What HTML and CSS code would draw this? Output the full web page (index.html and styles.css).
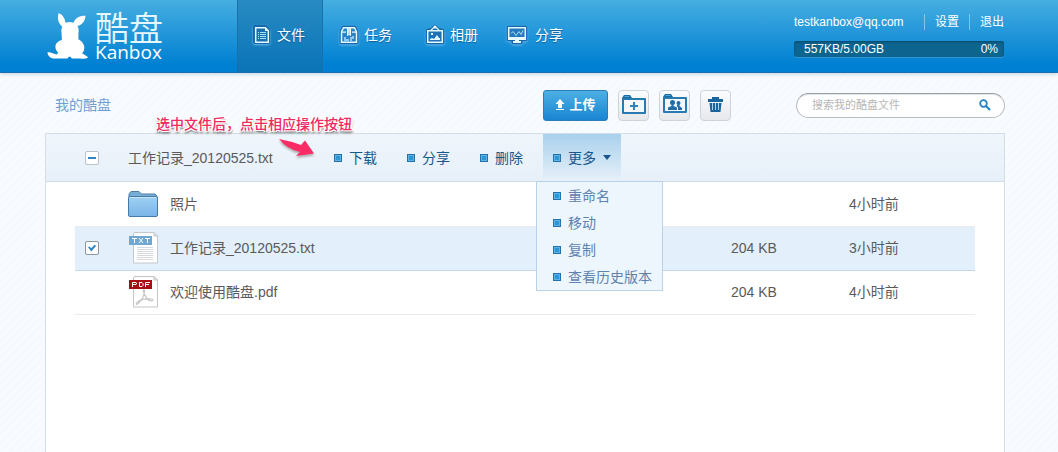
FILE: index.html
```html
<!DOCTYPE html>
<html lang="zh-CN">
<head>
<meta charset="utf-8">
<title>酷盘 Kanbox</title>
<link rel="stylesheet" href="styles.css">
</head>
<body>
<header class="header">
  <a class="logo" href="#">
    <svg class="logo-mark" viewBox="50 38 124 142" aria-hidden="true">
      <path fill="#fff" d="M85 40C92 41 104 50 106 69Q118 65 130 69C135 55 150 47 166 48C167 62 156 76 142 79C146 85 147 93 145 99L145 119C158 126 166 139 162 151Q160 158 156 161L166 167Q173 170 174 175Q164 179 151 177L125 177L121 172L116 172L112 177H68Q54 174 51 159Q58 156 66 161L79 165L84 160Q73 149 76 136Q80 125 95 121L94 99Q92 90 96 80C83 70 81 53 85 40Z"/>
    </svg>
    <span class="logo-text">
      <span class="logo-cn">酷盘</span>
      <span class="logo-en">Kanbox</span>
    </span>
  </a>
  <nav class="nav">
    <a class="nav-item nav-item-active" href="#">
      <svg class="nav-icon" viewBox="0 0 20 22" aria-hidden="true">
        <path class="icon-halo" d="M3 3h10l3 3v12H3z"/>
        <path fill="#1a6fae" stroke="#e3fbff" stroke-width="1.500" d="M3.700 3.700h9.600l3 3v11.600H3.700z"/>
        <path stroke="#a8e2f7" d="M6 8.500h1m1 0h6M6 10.500h1m1 0h6M6 12.500h1m1 0h6M6 14.500h1m1 0h6"/>
        <path fill="#e3fbff" d="M13 3v4h4z"/>
      </svg>
      <span>文件</span>
    </a>
    <a class="nav-item" href="#">
      <svg class="nav-icon" viewBox="0 0 20 22" aria-hidden="true">
        <path class="icon-halo" d="M4.500 3.700h11l2 4v10.600h-15V7.700z"/>
        <path fill="#2a83c8" stroke="#e3fbff" stroke-width="1.500" d="M4.500 3.700h11l2 4v10.600h-15V7.700z"/>
        <path fill="#e3fbff" d="M3 7.500h4v1.200H3zM13 7.500h4v1.200h-4zM8 4h1v6.500l1-.7 1 .7V4h1v8l-2-1-2 1z"/>
        <path fill="#bfe6fa" d="M9 4h2v6l-1-.5-1 .5z"/>
        <path fill="#8ac9ee" d="M5 13h2v2h3v2H5zM11 13h2v-1h2v3h-2v2h-2z"/>
      </svg>
      <span>任务</span>
    </a>
    <a class="nav-item" href="#">
      <svg class="nav-icon" viewBox="0 0 20 22" aria-hidden="true">
        <path class="icon-halo" d="M2.700 6.700l4-1 3.300-3 3.300 3 4 1v11.600H2.700z"/>
        <path fill="none" stroke="#e3fbff" stroke-width="1.300" d="M6 6l3-2.500M14 6l-3-2.500"/>
        <circle cx="10" cy="3" r="1.600" fill="#e3fbff"/>
        <path fill="#1e71b6" stroke="#e3fbff" stroke-width="1.500" d="M2.700 6.700h14.600v11.600H2.700z"/>
        <path fill="#e3fbff" d="M5 16v-1l2-1 2 1 3-4 2 3h1v2zM6 9h2v2H6z"/>
      </svg>
      <span>相册</span>
    </a>
    <a class="nav-item nav-item-share" href="#">
      <svg class="nav-icon" viewBox="0 0 20 22" aria-hidden="true">
        <path class="icon-halo" d="M1.700 3.700h16.600v11.600H14l-.5 3h-7l-.5-3H1.700z"/>
        <path fill="#2479bf" stroke="#e3fbff" stroke-width="1.500" d="M1.700 3.700h16.600v11.600H1.700z"/>
        <path fill="none" stroke="#a8e2f7" d="M4 9.500l2-2 3 4 3-4 2 3 2-4"/>
        <path fill="#e3fbff" d="M2 13h16v2h-6v2h2v2H6v-2h2v-2H2z"/>
      </svg>
      <span>分享</span>
    </a>
  </nav>
  <div class="account">
    <div class="account-links">
      <span class="account-mail">testkanbox@qq.com</span>
      <a class="account-link" href="#">设置</a>
      <a class="account-link" href="#">退出</a>
    </div>
    <div class="quota"><span>557KB/5.00GB</span><span>0%</span></div>
  </div>
</header>

<main class="main">
  <div class="toolbar">
    <h1 class="crumb">我的酷盘</h1>
    <div class="tools">
      <button class="upload" type="button">
        <svg class="upload-icon" viewBox="0 0 10 12" aria-hidden="true"><path fill="#fff" d="M5 0l4.500 5H7v4H3V5H.5zM1 10h8v1H1z"/></svg>
        <span>上传</span>
      </button>
      <button class="tool" type="button" aria-label="新建文件夹">
        <svg class="tool-icon" viewBox="0 0 26 22" aria-hidden="true">
          <path fill="#1b6ba5" d="M1 4l2-3h6l2 3v2H1z"/><path fill="#4fa5d8" d="M3 3l1-1h4l1 1z"/>
          <path fill="#f4f8fc" stroke="#2a7ab2" stroke-width="2" stroke-linejoin="round" d="M2 5h22v14H2z"/>
          <path fill="#2f82bb" d="M12 8h2v3h3v2h-3v3h-2v-3H9v-2h3z"/>
        </svg>
      </button>
      <button class="tool" type="button" aria-label="共享文件夹">
        <svg class="tool-icon" viewBox="0 0 26 22" aria-hidden="true">
          <path fill="#1b6ba5" d="M1 3l2-3h6l2 3v2H1z"/><path fill="#4fa5d8" d="M3 2l1-1h4l1 1z"/>
          <path fill="#f4f8fc" stroke="#2a7ab2" stroke-width="2" stroke-linejoin="round" d="M2 4h22v14H2z"/>
          <circle cx="10.500" cy="8.500" r="2.500" fill="#1f6ca6"/>
          <circle cx="16.500" cy="9" r="2" fill="#1f6ca6"/>
          <path fill="#1f6ca6" d="M9.500 10h2v2l3.500 1.500V16H6v-2.500L9.500 12zM16 10h1.500v2l2.500 2v2h-4v-3l-1.500-.7z"/>
        </svg>
      </button>
      <button class="tool" type="button" aria-label="删除">
        <svg class="tool-icon" viewBox="0 0 26 22" aria-hidden="true">
          <path fill="none" stroke="#1b659e" stroke-width="2" d="M10 5V4h5v1"/>
          <path fill="#1b659e" d="M5 5h15v3H5zM6.500 9h12l-1 9h-10z"/>
          <path stroke="#a9d4ee" d="M9.500 9v7M12.500 9v7M15.500 9v7"/>
        </svg>
      </button>
    </div>
    <form class="search">
      <input class="search-input" type="text" aria-label="搜索" placeholder="搜索我的酷盘文件">
      <button class="search-button" type="button" aria-label="搜索">
        <svg class="search-icon" viewBox="0 0 12 12" aria-hidden="true"><circle cx="4.500" cy="4.500" r="3.300" fill="none" stroke="#2583c4" stroke-width="1.800"/><path stroke="#2583c4" stroke-width="2.200" d="M7 7l4 4"/></svg>
      </button>
    </form>
  </div>

  <section class="panel">
    <div class="actionbar">
      <input class="check check-partial" type="checkbox" aria-label="全选">
      <span class="selected-name">工作记录_20120525.txt</span>
      <div class="actions">
        <button class="action" type="button"><i class="bullet"></i>下载</button>
        <button class="action" type="button"><i class="bullet"></i>分享</button>
        <button class="action" type="button"><i class="bullet"></i>删除</button>
        <div class="more">
          <button class="action action-open" type="button" aria-expanded="true"><i class="bullet"></i>更多<i class="caret"></i></button>
          <div class="menu">
            <button class="menu-item" type="button"><i class="bullet"></i>重命名</button>
            <button class="menu-item" type="button"><i class="bullet"></i>移动</button>
            <button class="menu-item" type="button"><i class="bullet"></i>复制</button>
            <button class="menu-item" type="button"><i class="bullet"></i>查看历史版本</button>
          </div>
        </div>
      </div>
    </div>
    <table class="files">
      <tbody>
        <tr class="file">
          <td class="cell-check"></td>
          <td class="cell-icon">
            <svg class="file-icon" viewBox="0 0 32 32" aria-hidden="true">
              <defs><linearGradient id="folder" x1="0" y1="0" x2="0" y2="1"><stop offset="0" stop-color="#9fd0f3"/><stop offset="1" stop-color="#7ab5e6"/></linearGradient></defs>
              <path fill="#78add6" stroke="#4b7fa9" d="M2 9V6l2-2.500h8L14.500 6H28l2 2v2z"/>
              <rect x="1.500" y="8.500" width="29" height="20" rx="1.500" fill="url(#folder)" stroke="#457ba8"/>
              <path stroke="#c4e4fa" d="M2.500 9.500h27"/>
            </svg>
          </td>
          <td class="cell-name">照片</td>
          <td class="cell-size"></td>
          <td class="cell-date">4小时前</td>
        </tr>
        <tr class="file file-selected">
          <td class="cell-check"><input class="check" type="checkbox" checked aria-label="选择 工作记录_20120525.txt"></td>
          <td class="cell-icon">
            <svg class="file-icon" viewBox="0 0 32 32" aria-hidden="true">
              <path fill="#fff" stroke="#c4c9ce" d="M6.500 2q0-1.500 1.500-1.500h19l3.500 3.500v27h-24z"/>
              <path fill="#e6e9ec" stroke="#c4c9ce" d="M27 .5V4h3.500z"/>
              <path stroke="#d6dade" d="M10 15.500h16M10 17.500h16M10 19.500h16M10 21.500h16M10 23.500h16M10 25.500h16M10 27.500h16"/>
              <path fill="#71a8d1" d="M2 4h23v9H2z"/>
              <path fill="none" stroke="#fff" d="M5 6.500h5M7.500 6v5M12 6l4 5M16 6l-4 5M18 6.500h5M20.500 6v5"/>
            </svg>
          </td>
          <td class="cell-name">工作记录_20120525.txt</td>
          <td class="cell-size">204 KB</td>
          <td class="cell-date">3小时前</td>
        </tr>
        <tr class="file">
          <td class="cell-check"></td>
          <td class="cell-icon">
            <svg class="file-icon" viewBox="0 0 32 32" aria-hidden="true">
              <path fill="#fff" stroke="#c4c4c4" d="M6.500 2q0-1.500 1.500-1.500h19l3.500 3.500v27h-24z"/>
              <path fill="#eee" stroke="#c4c4c4" d="M27 .5V4h3.500z"/>
              <path fill="none" stroke="#c6c6c6" stroke-width="1.200" d="M16 14q2-1 1.500 2-1 7-7 12-2 1-1-1 4-5 15-4 3 1 0 2-6-1-8.500-11"/>
              <path fill="#a80f14" d="M2 4h23v9H2z"/>
              <path fill="none" stroke="#fff" d="M5.500 11V6.500H9l.5.500v1l-.5.500H6M12.500 6v4.500H15l1-1v-2l-1-1h-2M18.500 11V6.500H23M19 8.500h3"/>
            </svg>
          </td>
          <td class="cell-name">欢迎使用酷盘.pdf</td>
          <td class="cell-size">204 KB</td>
          <td class="cell-date">4小时前</td>
        </tr>
      </tbody>
    </table>
  </section>

  <div class="hint">
    <p class="hint-text">选中文件后，点击相应操作按钮</p>
    <svg class="hint-arrow" viewBox="0 0 36 18" aria-hidden="true"><path fill="#fb2b66" d="M0 0Q11 2 22 6L26 1.500L35 14.500L17 17L21 13Q8 10 0 0z"/></svg>
  </div>
</main>
</body>
</html>
```

FILE: styles.css
```css
* {
  box-sizing: border-box;
}

body {
  margin: 0;
  min-height: 100vh;
  display: flex;
  flex-direction: column;
  color: #5a5a5a;
  font: 14px/20px "Liberation Sans", "Noto Sans CJK SC", sans-serif;
  background: repeating-linear-gradient(135deg, #f6fafe 0 3px, #f8fbff 3px 6px);
}

a {
  color: inherit;
  text-decoration: none;
}

button {
  margin: 0;
  padding: 0;
  border: 0;
  background: none;
  color: inherit;
  font: inherit;
  cursor: pointer;
}

svg {
  display: block;
}

/* Header */
.header {
  display: flex;
  height: 73px;
  padding: 0 54px 0 47px;
  color: #fff;
  background: linear-gradient(#46aee1, #0080d2 90%);
  border-bottom: 1px solid #1d6fab;
  box-shadow: 0 1px 4px #c3d2e2;
}

.logo {
  display: flex;
  gap: 7px;
  width: 190px;
  padding-top: 12px;
}

.logo-mark {
  width: 41px;
  height: 48px;
}

.logo-text {
  display: flex;
  flex-direction: column;
}

.logo-cn {
  color: #e6f8ff;
  font: 350 34px/30px "Noto Sans CJK SC DemiLight", "Noto Sans CJK SC", sans-serif;
}

.logo-en {
  font: 500 19px/20px "Open Sans", sans-serif;
}

.nav {
  display: flex;
}

.nav-item {
  display: flex;
  align-items: center;
  gap: 5px;
  width: 86px;
  padding: 0 0 2px 16px;
  text-shadow: 0 1px 1px #0c5c99;
}

.nav-item-active {
  background: linear-gradient(#288bc2, #0a74b8);
  border: 1px solid #1a70a8;
  border-width: 0 1px;
  padding-left: 14px;
}

.nav-item-share {
  gap: 8px;
  padding-left: 12px;
}

.nav-icon {
  width: 20px;
  height: 22px;
  overflow: visible;
  filter: drop-shadow(0 1px 1px #6cbcec);
}

.icon-halo {
  fill: #1767ad;
  stroke: #1767ad;
  stroke-width: 4px;
  stroke-linejoin: round;
}

.account {
  width: 210px;
  margin-left: auto;
  padding-top: 14px;
  font-size: 12px;
  line-height: 16px;
}

.account-links {
  display: flex;
  gap: 10px;
}

.account-mail {
  flex: 1;
}

.account-link {
  padding-left: 10px;
  border-left: 1px solid #80c7ed;
}

.quota {
  display: flex;
  justify-content: space-between;
  margin-top: 11px;
  padding: 0 6px 0 10px;
  border-radius: 3px;
  background: #0c648f;
  box-shadow: inset 0 1px 2px #084868, 0 1px 0 #2f97d6;
}

/* Toolbar */
.main {
  position: relative;
  flex: 1;
  display: flex;
  flex-direction: column;
  padding: 0 53px 0 45px;
}

.toolbar {
  display: flex;
  align-items: center;
  height: 60px;
  padding-top: 4px;
}

.crumb {
  flex: 1;
  margin: 0;
  padding-left: 10px;
  color: #6f9fd8;
  font-size: 14px;
  font-weight: 400;
}

.tools {
  display: flex;
  gap: 10px;
  margin-right: 65px;
}

.upload {
  display: flex;
  align-items: center;
  justify-content: center;
  gap: 4px;
  width: 65px;
  height: 31px;
  border: 1px solid #2b7fb9;
  border-radius: 3px;
  color: #fff;
  font-size: 13px;
  font-weight: 700;
  background: linear-gradient(#4db0e4, #1985d2);
}

.upload-icon {
  width: 10px;
  height: 12px;
}

.tool {
  display: grid;
  place-items: center;
  width: 31px;
  height: 31px;
  border: 1px solid #cfd3da;
  border-radius: 4px;
  background: linear-gradient(#fbfcfe, #e6e8ec);
}

.tool-icon {
  width: 26px;
  height: 22px;
}

.search {
  display: flex;
  align-items: center;
  width: 209px;
  height: 25px;
  padding: 0 13px 0 15px;
  border: 1px solid #b9bcc1;
  border-top-color: #9b9ea3;
  border-radius: 13px;
  background: #fff;
  box-shadow: inset 0 1px 1px #e1e3e6;
}

.search-input {
  flex: 1;
  min-width: 0;
  padding: 0;
  border: 0;
  outline: 0;
  background: none;
  color: #555;
  font: 11px/16px "Liberation Sans", "Noto Sans CJK SC", sans-serif;
}

.search-input::placeholder {
  color: #b7b7b7;
}

.search-icon {
  width: 12px;
  height: 12px;
}

/* File panel */
.panel {
  flex: 1;
  border: 1px solid #d3dee8;
  border-bottom: 0;
  background: #fff;
}

.actionbar {
  display: flex;
  align-items: center;
  height: 48px;
  padding-left: 39px;
  border-bottom: 1px solid #d0dde8;
  background: linear-gradient(#eff5fb, #e7f0f9);
}

.check {
  appearance: none;
  display: grid;
  place-items: center;
  width: 14px;
  height: 14px;
  margin: 0;
  border: 1px solid #8f959b;
  border-radius: 2px;
  background: #fff;
}

.check:checked::before {
  content: "";
  width: 8px;
  height: 7px;
  background: #3185c3;
  clip-path: polygon(0 40%, 20% 28%, 40% 55%, 85% 0, 100% 22%, 42% 100%);
}

.check-partial {
  border-color: #b9c2ca;
}

.check-partial::before {
  content: "";
  width: 8px;
  height: 2px;
  background: #2f86c6;
}

.selected-name {
  width: 196px;
  margin-left: 29px;
}

.actions {
  display: flex;
  align-self: stretch;
  gap: 10px;
  color: #17578c;
}

.action {
  display: flex;
  align-items: center;
  gap: 7px;
  height: 47px;
  padding: 0 10px;
  white-space: nowrap;
}

.action-open {
  background: linear-gradient(#a8d1ec, #e7f0f9);
}

.bullet {
  width: 8px;
  height: 8px;
  border: 1px solid #2572ab;
  background: #2d97d6;
  box-shadow: inset 0 0 0 1px #5fb2e4;
}

.caret {
  width: 8px;
  border: 4px solid transparent;
  border-top: 5px solid #17578c;
  border-bottom: 0;
}

.more {
  position: relative;
}

.menu {
  position: absolute;
  top: 47px;
  left: -7px;
  border: 1px solid #b9d2e8;
  background: #edf5fd;
  color: #5f83b0;
}

.menu-item {
  display: flex;
  align-items: center;
  gap: 7px;
  width: 100%;
  height: 27px;
  padding: 0 10px 0 16px;
  white-space: nowrap;
}

.files {
  width: calc(100% - 58px);
  margin: 0 29px;
  border-collapse: collapse;
  table-layout: fixed;
}

.file td {
  height: 44px;
  padding: 0;
  border-bottom: 1px solid #ebebeb;
}

.file-selected {
  background: #e3effb;
}

.file-selected td {
  border-top: 1px solid #c5d8ea;
  border-bottom-color: #c5d8ea;
}

.file .cell-check {
  width: 52px;
  padding-left: 10px;
}

.cell-icon {
  width: 43px;
}

.cell-size {
  width: 118px;
}

.cell-date {
  width: 126px;
}

.file-icon {
  width: 32px;
  height: 32px;
}

/* Callout */
.hint {
  position: absolute;
  top: 41px;
  left: 156px;
  color: #ee2a62;
  pointer-events: none;
}

.hint-text {
  margin: 0;
  font-weight: 500;
  text-shadow: -1px -1px 0 #fff, 1px -1px 0 #fff, -1px 1px 0 #fff, 1px 1px 0 #fff, -2px 0 0 #fff, 2px 0 0 #fff, 0 2px 3px #555, 1px 2px 2px #777;
}

.hint-arrow {
  width: 36px;
  height: 18px;
  margin: 5px 0 0 123px;
  filter: drop-shadow(0 2px 1px #aaa);
}
```
